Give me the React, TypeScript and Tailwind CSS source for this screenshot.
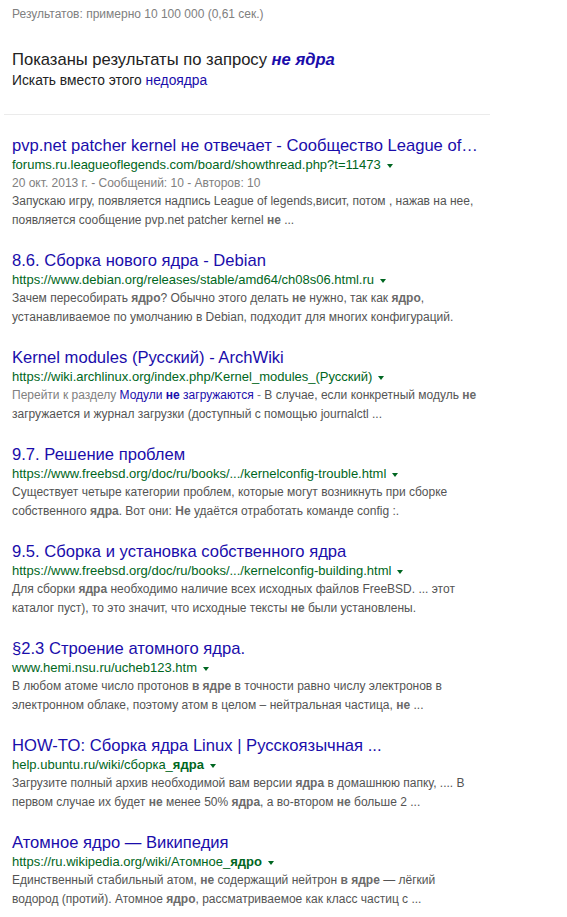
import React from 'react';

type Part = string | { b: string } | { link: string } | { gray: string };

type Result = {
  title: string;
  url: Part[];
  meta?: string;
  snippet: Part[];
};

const results: Result[] = [
  {
    title: 'pvp.net patcher kernel не отвечает - Сообщество League of…',
    url: ['forums.ru.leagueoflegends.com/board/showthread.php?t=11473'],
    meta: '20 окт. 2013 г. - Сообщений: 10 - Авторов: 10',
    snippet: [
      'Запускаю игру, появляется надпись League of legends,висит, потом , нажав на нее, появляется сообщение pvp.net patcher kernel ',
      { b: 'не' },
      ' ...',
    ],
  },
  {
    title: '8.6. Сборка нового ядра - Debian',
    url: ['https://www.debian.org/releases/stable/amd64/ch08s06.html.ru'],
    snippet: [
      'Зачем пересобирать ',
      { b: 'ядро' },
      '? Обычно этого делать ',
      { b: 'не' },
      ' нужно, так как ',
      { b: 'ядро' },
      ', устанавливаемое по умолчанию в Debian, подходит для многих конфигураций.',
    ],
  },
  {
    title: 'Kernel modules (Русский) - ArchWiki',
    url: ['https://wiki.archlinux.org/index.php/Kernel_modules_(Русский)'],
    snippet: [
      { gray: 'Перейти к разделу ' },
      { link: 'Модули ' },
      { link: 'не' },
      { link: ' загружаются' },
      { gray: ' - ' },
      'В случае, если конкретный модуль ',
      { b: 'не' },
      ' загружается и журнал загрузки (доступный с помощью journalctl ...',
    ],
  },
  {
    title: '9.7. Решение проблем',
    url: ['https://www.freebsd.org/doc/ru/books/.../kernelconfig-trouble.html'],
    snippet: [
      'Существует четыре категории проблем, которые могут возникнуть при сборке собственного ',
      { b: 'ядра' },
      '. Вот они: ',
      { b: 'Не' },
      ' удаётся отработать команде config :.',
    ],
  },
  {
    title: '9.5. Сборка и установка собственного ядра',
    url: ['https://www.freebsd.org/doc/ru/books/.../kernelconfig-building.html'],
    snippet: [
      'Для сборки ',
      { b: 'ядра' },
      ' необходимо наличие всех исходных файлов FreeBSD. ... этот каталог пуст), то это значит, что исходные тексты ',
      { b: 'не' },
      ' были установлены.',
    ],
  },
  {
    title: '§2.3 Строение атомного ядра.',
    url: ['www.hemi.nsu.ru/ucheb123.htm'],
    snippet: [
      'В любом атоме число протонов ',
      { b: 'в ядре' },
      ' в точности равно числу электронов в электронном облаке, поэтому атом в целом – нейтральная частица, ',
      { b: 'не' },
      ' ...',
    ],
  },
  {
    title: 'HOW-TO: Сборка ядра Linux | Русскоязычная ...',
    url: ['help.ubuntu.ru/wiki/сборка_', { b: 'ядра' }],
    snippet: [
      'Загрузите полный архив необходимой вам версии ',
      { b: 'ядра' },
      ' в домашнюю папку, .... В первом случае их будет ',
      { b: 'не' },
      ' менее 50% ',
      { b: 'ядра' },
      ', а во-втором ',
      { b: 'не' },
      ' больше 2 ...',
    ],
  },
  {
    title: 'Атомное ядро — Википедия',
    url: ['https://ru.wikipedia.org/wiki/Атомное_', { b: 'ядро' }],
    snippet: [
      'Единственный стабильный атом, ',
      { b: 'не' },
      ' содержащий нейтрон ',
      { b: 'в ядре' },
      ' — лёгкий водород (протий). Атомное ',
      { b: 'ядро' },
      ', рассматриваемое как класс частиц с ...',
    ],
  },
];

function renderParts(parts: Part[], boldClass: string) {
  return parts.map((p, i) => {
    if (typeof p === 'string') return <span key={i}>{p}</span>;
    if ('b' in p) return <b key={i} className={boldClass}>{p.b}</b>;
    if ('link' in p)
      return (
        <span key={i} className={p.link === 'не' ? 'text-[#1a0dab] font-bold' : 'text-[#1a0dab]'}>
          {p.link}
        </span>
      );
    return <span key={i} className="text-[#808080]">{p.gray}</span>;
  });
}

function ResultItem({ r }: { r: Result }) {
  return (
    <div className="mb-[22px]">
      <a href="#" className="block whitespace-nowrap text-[16.6px] leading-[20px] text-[#1a0dab]">
        {r.title}
      </a>
      <div className="flex items-center text-[13px] leading-[18px] text-[#006621]">
        <cite className="not-italic">{renderParts(r.url, 'font-bold')}</cite>
        <span className="ml-[6px] mt-[1px] w-0 h-0 border-x-[3.5px] border-x-transparent border-t-[4px] border-t-[#006621]" />
      </div>
      {r.meta && <div className="text-[12px] leading-[18px] text-[#808080]">{r.meta}</div>}
      <div className="w-[470px] text-[12px] leading-[18.5px] text-[#545454]">
        {renderParts(r.snippet, 'font-bold text-[#6a6a6a]')}
      </div>
    </div>
  );
}

export default function App() {
  return (
    <div className="min-h-screen bg-white font-['Liberation_Sans',Arial,sans-serif]">
      <div className="pl-[12px] pt-[6px]">
        <div className="text-[12px] leading-[16px] text-[#808080]">
          Результатов: примерно 10 100 000 (0,61 сек.)
        </div>
        <div className="mt-[27px] text-[16.6px] leading-[22px] text-[#222]">
          Показаны результаты по запросу{' '}
          <a href="#" className="font-bold italic text-[#1a0dab]">
            не ядра
          </a>
        </div>
        <div className="text-[13.8px] leading-[20px] text-[#222]">
          Искать вместо этого{' '}
          <a href="#" className="text-[#1a0dab]">
            недоядра
          </a>
        </div>
      </div>
      <div className="ml-[4px] w-[486px] mt-[23px] h-px bg-[#ebebeb]" />
      <div className="w-[530px] pl-[12px] pt-[21px]">
        {results.map((r, i) => (
          <ResultItem key={i} r={r} />
        ))}
      </div>
    </div>
  );
}
